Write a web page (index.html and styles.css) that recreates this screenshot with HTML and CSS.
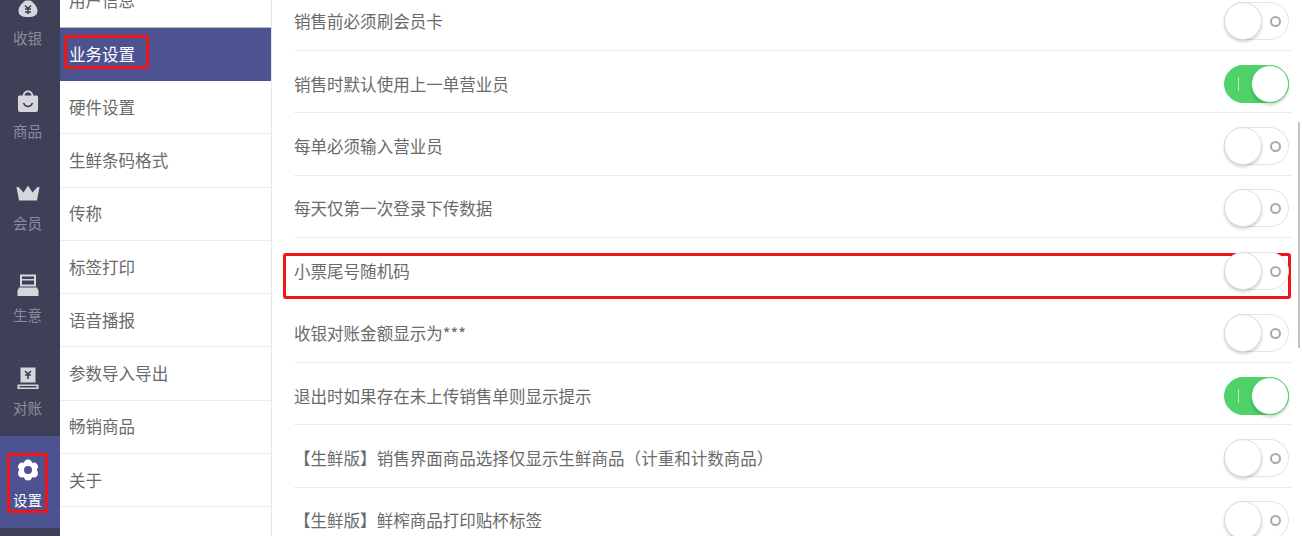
FILE: index.html
```html
<!DOCTYPE html>
<html lang="zh">
<head>
    <meta charset="UTF-8">
    <meta name="viewport" content="width=device-width, initial-scale=1.0">
    <title>设置</title>
    <link rel="stylesheet" href="styles.css">
</head>
<body>
    <div class="app">
        <nav class="rail">
            <div class="rail-item">
                <svg class="rail-icon" viewBox="0 0 24 24"><g transform="translate(0 -2)"><path d="M8.500 1h7l-1.600 4.200h-3.800zM9.600 6.400h4.800C18.500 9 21.500 13 21.500 17c0 4-3 6-9.500 6s-9.500-2-9.500-6c0-4 3-8 7.100-10.600z"/><path class="cut" d="M9 11.500l3 3 3-3M9 15h6M9 18h6M12 14.500V20"/></g></svg>
                <span>收银</span>
            </div>
            <div class="rail-item">
                <svg class="rail-icon" viewBox="0 0 24 24"><path d="M3.500 6.500h3.200C7 3.500 9 1.500 12 1.500s5 2 5.300 5h3.200c1 0 1.500.5 1.500 1.500v13c0 1.200-.8 2-2 2H4c-1.200 0-2-.8-2-2V8c0-1 .5-1.500 1.500-1.500zM8.500 6.500h7C15.200 4.500 14 3.200 12 3.200S8.800 4.500 8.500 6.500z"/><path class="cut" d="M7.500 14c1 2.500 2.700 3.500 4.500 3.500s3.500-1 4.500-3.500"/></svg>
                <span>商品</span>
            </div>
            <div class="rail-item">
                <svg class="rail-icon" viewBox="0 0 24 24"><path d="M12 4.500l4.500 7 5-5.500 2 0-2.500 13.500h-18L0.500 6l2 0 5 5.500z"/></svg>
                <span>会员</span>
            </div>
            <div class="rail-item">
                <svg class="rail-icon" viewBox="0 0 24 24"><path d="M4 1.500h16v12H4zM6 3.500v2.500h12V3.500zM6 7.500v4h12v-4z" fill-rule="evenodd"/><path d="M3 14.500h18l1.500 3v5.500h-21v-5.500z"/></svg>
                <span>生意</span>
            </div>
            <div class="rail-item">
                <svg class="rail-icon" viewBox="0 0 24 24"><path d="M4.500 1.500h15v15h-15zM1.500 18.500h21v4.500h-21zM3.500 20v1.500h17V20z" fill-rule="evenodd"/><path class="cut" d="M9 5l3 3 3-3M9 9h6M12 8v5"/></svg>
                <span>对账</span>
            </div>
            <div class="rail-item rail-active">
                <div class="rail-mark"></div>
                <svg class="rail-icon" viewBox="0 0 24 24">
                    <circle cx="12" cy="5.600" r="4.200"/><circle cx="12" cy="18.400" r="4.200"/>
                    <circle cx="6.200" cy="8.800" r="4.200"/><circle cx="17.800" cy="8.800" r="4.200"/>
                    <circle cx="6.200" cy="15.200" r="4.200"/><circle cx="17.800" cy="15.200" r="4.200"/>
                    <circle cx="12" cy="12" r="6"/><circle class="hole" cx="12" cy="12" r="4"/>
                </svg>
                <span>设置</span>
            </div>
        </nav>

        <aside class="menu">
            <div class="menu-item menu-first">用户信息</div>
            <div class="menu-item menu-active"><span class="menu-mark">业务设置</span></div>
            <div class="menu-item">硬件设置</div>
            <div class="menu-item">生鲜条码格式</div>
            <div class="menu-item">传称</div>
            <div class="menu-item">标签打印</div>
            <div class="menu-item">语音播报</div>
            <div class="menu-item">参数导入导出</div>
            <div class="menu-item">畅销商品</div>
            <div class="menu-item">关于</div>
        </aside>

        <main class="settings">
            <div class="row"><span>销售前必须刷会员卡</span><div class="switch"></div></div>
            <div class="row"><span>销售时默认使用上一单营业员</span><div class="switch on"></div></div>
            <div class="row"><span>每单必须输入营业员</span><div class="switch"></div></div>
            <div class="row"><span>每天仅第一次登录下传数据</span><div class="switch"></div></div>
            <div class="row row-mark"><div class="row-box"></div><span>小票尾号随机码</span><div class="switch"></div></div>
            <div class="row"><span>收银对账金额显示为***</span><div class="switch"></div></div>
            <div class="row"><span>退出时如果存在未上传销售单则显示提示</span><div class="switch on"></div></div>
            <div class="row"><span>【生鲜版】销售界面商品选择仅显示生鲜商品（计重和计数商品）</span><div class="switch"></div></div>
            <div class="row"><span>【生鲜版】鲜榨商品打印贴杯标签</span><div class="switch"></div></div>
        </main>
        <div class="scroll-line"></div>
    </div>
</body>
</html>
```

FILE: styles.css
```css
html, body {
    margin: 0;
    padding: 0;
    height: 100%;
    overflow: hidden;
    background: #fff;
}
.app {
    position: relative;
    display: flex;
    height: 536px;
    overflow: hidden;
    font-family: "Noto Sans CJK SC", "Noto Sans", sans-serif;
    font-size: 16.55px;
    color: #6a6a6a;
}

/* left rail */
.rail {
    width: 60px;
    flex: none;
    margin-top: -25.7px;
    height: 600px;
    background: #3e4058;
}
.rail-item {
    position: relative;
    height: 92.3px;
    display: flex;
    flex-direction: column;
    align-items: center;
    padding: 22px 5px 0 0;
    box-sizing: border-box;
    color: #8b8d9d;
    font-size: 14.5px;
    line-height: 20px;
}
.rail-item span {
    margin-top: 8px;
}
.rail-icon {
    width: 24px;
    height: 24px;
    fill: #d6d6dc;
}
.rail-icon .cut {
    fill: none;
    stroke: #3e4058;
    stroke-width: 1.6;
}
.rail-icon .hole {
    fill: #4d5290;
}
.rail-active {
    background: #4d5290;
    color: #fff;
}
.rail-active .rail-icon {
    fill: #fff;
}
.rail-mark {
    position: absolute;
    left: 7px;
    top: 17px;
    width: 41px;
    height: 60px;
    box-sizing: border-box;
    border: 3px solid #f01414;
    border-radius: 3px;
}

/* second column */
.menu {
    width: 211px;
    flex: none;
    margin-top: -25.6px;
    border-right: 1px solid #e6e6e6;
}
.menu-item {
    height: 53.3px;
    box-sizing: border-box;
    display: flex;
    align-items: center;
    padding: 0 0 1px 9px;
    border-bottom: 1px solid #ececec;
}
.menu-first {
    border-bottom-color: #bbb;
}
.menu-active {
    background: #4d5290;
    color: #fff;
    border-bottom: none;
}
.menu-mark {
    padding: 5px 11px 1px 2px;
    margin: 0 0 4px -5px;
    border: 3px solid #f01414;
    border-radius: 3px;
    line-height: 22px;
}

/* settings list */
.settings {
    flex: 1;
    margin-top: -11.4px;
    padding: 0 10px 0 22px;
}
.row {
    position: relative;
    height: 62.4px;
    box-sizing: border-box;
    display: flex;
    align-items: center;
    justify-content: space-between;
    padding: 4px 3px 0 0;
    border-bottom: 1px solid #ececec;
}
.row-mark {
    border-bottom: none;
}
.row-box {
    position: absolute;
    left: -11px;
    right: 1px;
    top: 15px;
    height: 46px;
    box-sizing: border-box;
    border: 3px solid #f01414;
    border-radius: 3px;
}
.switch {
    position: relative;
    width: 65px;
    height: 38px;
    box-sizing: border-box;
    border: 1px solid #e4e4e4;
    border-radius: 19px;
    background: #fff;
}
.switch::before {
    content: "";
    position: absolute;
    left: -1px;
    top: -1px;
    width: 38px;
    height: 38px;
    box-sizing: border-box;
    border-radius: 50%;
    background: #fff;
    border: 1px solid #ddd;
    box-shadow: 0 2px 3px rgba(0,0,0,0.18);
}
.switch::after {
    content: "";
    position: absolute;
    right: 7px;
    top: 13px;
    width: 11px;
    height: 11px;
    box-sizing: border-box;
    border: 2px solid #aaa;
    border-radius: 50%;
}
.switch.on {
    background: #4fd26a;
    border-color: #4fd26a;
}
.switch.on::before {
    left: auto;
    right: -1px;
    border-color: #4fd26a;
}
.switch.on::after {
    left: 13px;
    right: auto;
    top: 11px;
    width: 1px;
    height: 14px;
    border: none;
    border-radius: 0;
    background: #bdeec8;
}
.scroll-line {
    position: absolute;
    left: 1298px;
    top: 122px;
    width: 2px;
    height: 226px;
    background: #c4c4c4;
}
```
